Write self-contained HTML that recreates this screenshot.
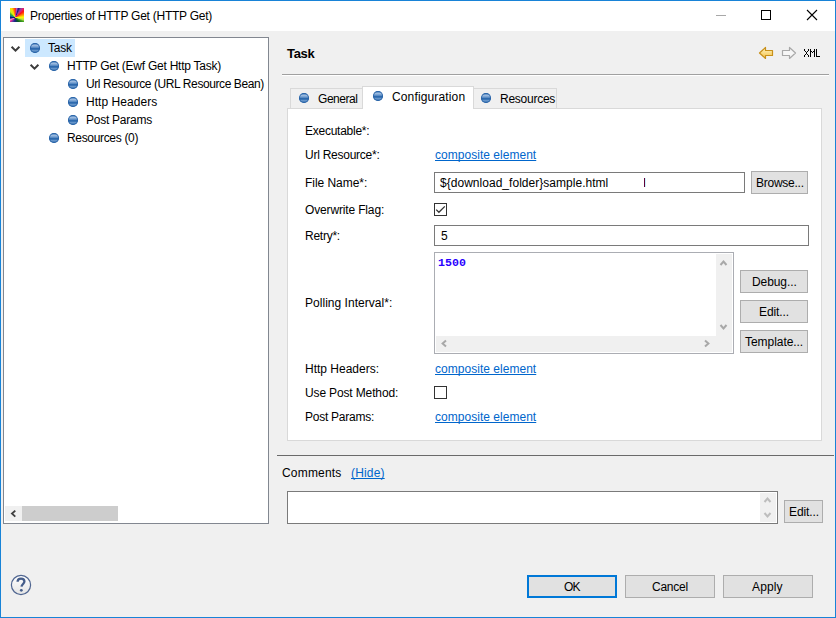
<!DOCTYPE html>
<html><head><meta charset="utf-8">
<style>
*{margin:0;padding:0;box-sizing:border-box}
html,body{width:836px;height:618px;overflow:hidden;background:#f0f0f0}
body{position:relative;font-family:"Liberation Sans",sans-serif;font-size:12px;color:#000}
.a{position:absolute}
.t{position:absolute;white-space:nowrap;font-size:12px;line-height:12px;letter-spacing:-0.25px}
.win{left:0;top:0;width:836px;height:618px;border:1px solid #1883d7}
.title{left:1px;top:1px;width:834px;height:30px;background:#fff}
.tree{left:3px;top:37px;width:266px;height:487px;border:1px solid #828790;background:#fff;overflow:hidden}
.ball{position:absolute;width:10px;height:10px;border-radius:50%;
 background:linear-gradient(#3b78b8 0%,#9ab9de 25%,#6a98cc 42%,#1f5fa6 58%,#6a98cc 76%,#2a66aa 100%);box-shadow:inset 0 0 0 1px rgba(35,95,165,0.85)}
.chev{position:absolute;width:7px;height:7px;border-right:1.6px solid #404040;border-bottom:1.6px solid #404040;transform:rotate(45deg)}
.btn{position:absolute;background:#e1e1e1;border:1px solid #adadad}
.tb{position:absolute;background:#fff;border:1px solid #7a7a7a}
.lnk{color:#0066cc;text-decoration:underline;text-decoration-skip-ink:none;letter-spacing:0.03px}
</style></head><body>
<div class="a win"></div>
<div class="a title"></div>
<!-- title icon -->
<div class="a" style="left:10px;top:8px;width:14px;height:14px;background:conic-gradient(from 0deg at 38% 68%,#ff2020 0deg,#c050c0 8deg,#201880 20deg,#9040a0 32deg,#e02070 42deg,#ff1010 52deg,#ff9000 70deg,#ffff00 87deg,#c0e040 105deg,#40a020 117deg,#106020 140deg,#0a3a60 170deg,#2a2090 195deg,#6040a0 215deg,#e02090 230deg,#f0a0d0 246deg,#0a0a70 267deg,#108090 289deg,#40b030 306deg,#d0f020 322deg,#ffe000 338deg,#ff8000 350deg,#ff2020 360deg)"></div>
<div class="t" style="left:30px;top:10px">Properties of HTTP Get (HTTP Get)</div>
<!-- window controls -->
<div class="a" style="left:716px;top:15px;width:10px;height:1px;background:#a8a8a8"></div>
<div class="a" style="left:761px;top:10px;width:10px;height:10px;border:1px solid #000"></div>
<svg class="a" style="left:806px;top:9px" width="12" height="12" viewBox="0 0 12 12"><path d="M1 1L11 11M11 1L1 11" stroke="#000" stroke-width="1.1"/></svg>

<!-- tree -->
<div class="a tree"></div>
<div class="a" style="left:25px;top:39px;width:50px;height:18px;background:#cce8ff"></div>
<svg class="a" style="left:10px;top:45px" width="12" height="9" viewBox="0 0 12 9"><path d="M1.6 1.8L5.5 5.7L9.4 1.8" stroke="#3c3c3c" stroke-width="2" fill="none"/></svg>
<svg class="a" style="left:29px;top:63px" width="12" height="9" viewBox="0 0 12 9"><path d="M1.6 1.8L5.5 5.7L9.4 1.8" stroke="#3c3c3c" stroke-width="2" fill="none"/></svg>
<div class="ball" style="left:30px;top:43px"></div>
<div class="ball" style="left:49px;top:61px"></div>
<div class="ball" style="left:68px;top:79px"></div>
<div class="ball" style="left:68px;top:97px"></div>
<div class="ball" style="left:68px;top:115px"></div>
<div class="ball" style="left:49px;top:133px"></div>
<div class="t" style="left:48px;top:42px">Task</div>
<div class="t" style="left:67px;top:60px">HTTP Get (Ewf Get Http Task)</div>
<div class="t" style="left:86px;top:78px;letter-spacing:-0.41px">Url Resource (URL Resource Bean)</div>
<div class="t" style="left:86px;top:96px;letter-spacing:0.05px">Http Headers</div>
<div class="t" style="left:86px;top:114px">Post Params</div>
<div class="t" style="left:67px;top:132px;letter-spacing:-0.33px">Resources (0)</div>
<!-- tree h scrollbar -->
<div class="a" style="left:5px;top:506px;width:17px;height:15px;background:#f0f0f0"></div>
<svg class="a" style="left:9px;top:509px" width="9" height="9" viewBox="0 0 9 9"><path d="M6.3 1.6L3 4.6L6.3 7.6" stroke="#404040" stroke-width="1.9" fill="none"/></svg>
<div class="a" style="left:22px;top:506px;width:96px;height:15px;background:#cdcdcd"></div>

<!-- right header -->
<div class="t" style="left:287px;top:47px;font-size:13px;line-height:13px;font-weight:bold;letter-spacing:-0.3px">Task</div>
<div class="a" style="left:282px;top:74px;width:547px;height:1px;background:#a0a0a0"></div>
<div class="a" style="left:282px;top:75px;width:547px;height:1px;background:#fff"></div>
<svg class="a" style="left:758px;top:46px" width="16" height="14" viewBox="0 0 16 14">
 <defs><linearGradient id="ga" x1="0" y1="0" x2="0" y2="1"><stop offset="0" stop-color="#fff6c8"/><stop offset="1" stop-color="#f5c040"/></linearGradient></defs>
 <path d="M1.5 7L7.5 1.5V4.5H14.5V9.5H7.5V12.5Z" fill="url(#ga)" stroke="#c8901a" stroke-width="1.2" stroke-linejoin="round"/></svg>
<svg class="a" style="left:781px;top:46px" width="16" height="14" viewBox="0 0 16 14">
 <path d="M14.5 7L8.5 1.5V4.5H1.5V9.5H8.5V12.5Z" fill="#f6f6f6" stroke="#a8a8a8" stroke-width="1.2" stroke-linejoin="round"/></svg>
<svg class="a" style="left:803px;top:48px" width="18" height="10" viewBox="0 0 18 10" shape-rendering="crispEdges" fill="#000"><rect x="1" y="1" width="1" height="1"/><rect x="5" y="1" width="1" height="1"/><rect x="1" y="2" width="1" height="1"/><rect x="5" y="2" width="1" height="1"/><rect x="2" y="3" width="1" height="1"/><rect x="4" y="3" width="1" height="1"/><rect x="3" y="4" width="1" height="1"/><rect x="3" y="5" width="1" height="1"/><rect x="2" y="6" width="1" height="1"/><rect x="4" y="6" width="1" height="1"/><rect x="1" y="7" width="1" height="1"/><rect x="5" y="7" width="1" height="1"/><rect x="1" y="8" width="1" height="1"/><rect x="5" y="8" width="1" height="1"/><rect x="7" y="1" width="1" height="1"/><rect x="11" y="1" width="1" height="1"/><rect x="7" y="2" width="1" height="1"/><rect x="11" y="2" width="1" height="1"/><rect x="7" y="3" width="1" height="1"/><rect x="11" y="3" width="1" height="1"/><rect x="7" y="4" width="1" height="1"/><rect x="11" y="4" width="1" height="1"/><rect x="7" y="5" width="1" height="1"/><rect x="11" y="5" width="1" height="1"/><rect x="7" y="6" width="1" height="1"/><rect x="11" y="6" width="1" height="1"/><rect x="7" y="7" width="1" height="1"/><rect x="11" y="7" width="1" height="1"/><rect x="7" y="8" width="1" height="1"/><rect x="11" y="8" width="1" height="1"/><rect x="8" y="3" width="1" height="1"/><rect x="10" y="3" width="1" height="1"/><rect x="9" y="4" width="1" height="1"/><rect x="13" y="1" width="1" height="1"/><rect x="13" y="2" width="1" height="1"/><rect x="13" y="3" width="1" height="1"/><rect x="13" y="4" width="1" height="1"/><rect x="13" y="5" width="1" height="1"/><rect x="13" y="6" width="1" height="1"/><rect x="13" y="7" width="1" height="1"/><rect x="13" y="8" width="1" height="1"/><rect x="14" y="8" width="1" height="1"/><rect x="15" y="8" width="1" height="1"/><rect x="16" y="8" width="1" height="1"/></svg>

<!-- tabs -->
<div class="a" style="left:290px;top:88px;width:73px;height:21px;background:#f0f0f0;border:1px solid #d9d9d9;border-bottom:none"></div>
<div class="a" style="left:473px;top:88px;width:84px;height:21px;background:#f0f0f0;border:1px solid #d9d9d9;border-bottom:none"></div>
<div class="a" style="left:287px;top:108px;width:535px;height:333px;background:#fff;border:1px solid #d9d9d9"></div>
<div class="a" style="left:362px;top:86px;width:112px;height:23px;background:#fff;border:1px solid #d9d9d9;border-bottom:none"></div>
<div class="ball" style="left:299px;top:93px"></div>
<div class="ball" style="left:373px;top:91px"></div>
<div class="ball" style="left:481px;top:93px"></div>
<div class="t" style="left:318px;top:93px;letter-spacing:-0.45px">General</div>
<div class="t" style="left:392px;top:91px;letter-spacing:0.14px">Configuration</div>
<div class="t" style="left:500px;top:93px">Resources</div>

<!-- form labels -->
<div class="t" style="left:305px;top:125px">Executable*:</div>
<div class="t" style="left:305px;top:149px">Url Resource*:</div>
<div class="t" style="left:305px;top:177px;letter-spacing:-0.04px">File Name*:</div>
<div class="t" style="left:305px;top:204px;letter-spacing:-0.15px">Overwrite Flag:</div>
<div class="t" style="left:305px;top:230px">Retry*:</div>
<div class="t" style="left:305px;top:297px;letter-spacing:0.03px">Polling Interval*:</div>
<div class="t" style="left:305px;top:363px;letter-spacing:0px">Http Headers:</div>
<div class="t" style="left:305px;top:387px;letter-spacing:-0.14px">Use Post Method:</div>
<div class="t" style="left:305px;top:411px">Post Params:</div>

<div class="t lnk" style="left:435px;top:149px">composite element</div>
<div class="tb" style="left:434px;top:172px;width:311px;height:21px"></div>
<div class="t" style="left:440px;top:177px;letter-spacing:0.03px">${download_folder}sample.html</div>
<div class="a" style="left:644px;top:178px;width:1px;height:9px;background:#600038"></div><div class="a" style="left:645px;top:178px;width:1px;height:9px;background:#c8f4ff"></div>
<div class="btn" style="left:751px;top:171px;width:57px;height:23px"></div>
<div class="t" style="left:756px;top:177px">Browse...</div>

<div class="a" style="left:434px;top:203px;width:13px;height:13px;border:1px solid #333;background:#fff"></div>
<svg class="a" style="left:434px;top:203px" width="13" height="13" viewBox="0 0 13 13"><path d="M2.2 6.6L4.9 9.3L10.8 3.4" stroke="#333" stroke-width="1.3" fill="none"/></svg>

<div class="tb" style="left:434px;top:225px;width:375px;height:21px"></div>
<div class="t" style="left:441px;top:230px">5</div>

<!-- polling textarea -->
<div class="a" style="left:434px;top:252px;width:300px;height:102px;border:1px solid #abadb3;background:#fff"></div>
<div class="a" style="left:716px;top:254px;width:16px;height:98px;background:#f0f0f0"></div>
<div class="a" style="left:436px;top:336px;width:296px;height:16px;background:#f0f0f0"></div>
<svg class="a" style="left:719px;top:259px" width="9" height="8" viewBox="0 0 9 8"><path d="M1.5 6L4.5 2.6L7.5 6" stroke="#a8a8a8" stroke-width="2" fill="none"/></svg>
<svg class="a" style="left:719px;top:323px" width="9" height="8" viewBox="0 0 9 8"><path d="M1.5 2L4.5 5.4L7.5 2" stroke="#a8a8a8" stroke-width="2" fill="none"/></svg>
<svg class="a" style="left:440px;top:339px" width="8" height="9" viewBox="0 0 8 9"><path d="M6 1.5L2.6 4.5L6 7.5" stroke="#a8a8a8" stroke-width="2" fill="none"/></svg>
<svg class="a" style="left:703px;top:339px" width="8" height="9" viewBox="0 0 8 9"><path d="M2 1.5L5.4 4.5L2 7.5" stroke="#a8a8a8" stroke-width="2" fill="none"/></svg>
<div class="t" style="left:438px;top:257px;font-family:'Liberation Mono',monospace;font-weight:bold;font-size:11.6px;line-height:11px;letter-spacing:0.05px;color:#2a00ff">1500</div>

<div class="btn" style="left:740px;top:270px;width:68px;height:23px"></div>
<div class="t" style="left:752px;top:276px;letter-spacing:-0.08px">Debug...</div>
<div class="btn" style="left:740px;top:300px;width:68px;height:23px"></div>
<div class="t" style="left:759px;top:306px;letter-spacing:-0.1px">Edit...</div>
<div class="btn" style="left:740px;top:330px;width:68px;height:23px"></div>
<div class="t" style="left:745px;top:336px;letter-spacing:-0.05px">Template...</div>

<div class="t lnk" style="left:435px;top:363px">composite element</div>
<div class="a" style="left:434px;top:386px;width:13px;height:13px;border:1px solid #333;background:#fff"></div>
<div class="t lnk" style="left:435px;top:411px">composite element</div>

<!-- sash separator -->
<div class="a" style="left:277px;top:455px;width:557px;height:1px;background:#6a6a6a"></div>
<div class="t" style="left:282px;top:467px;letter-spacing:0.19px">Comments</div>
<div class="t lnk" style="left:351px;top:467px;letter-spacing:0.17px">(Hide)</div>
<div class="tb" style="left:287px;top:491px;width:491px;height:33px"></div>
<div class="a" style="left:760px;top:493px;width:16px;height:29px;background:#f0f0f0"></div>
<svg class="a" style="left:763px;top:496px" width="9" height="8" viewBox="0 0 9 8"><path d="M1.5 6L4.5 2.6L7.5 6" stroke="#bdbdbd" stroke-width="2" fill="none"/></svg>
<svg class="a" style="left:763px;top:511px" width="9" height="8" viewBox="0 0 9 8"><path d="M1.5 2L4.5 5.4L7.5 2" stroke="#bdbdbd" stroke-width="2" fill="none"/></svg>
<div class="btn" style="left:784px;top:500px;width:39px;height:23px"></div>
<div class="t" style="left:789px;top:506px;letter-spacing:-0.1px">Edit...</div>

<!-- help -->
<svg class="a" style="left:10px;top:574px" width="22" height="22" viewBox="0 0 22 22">
 <defs><linearGradient id="gh" x1="0" y1="0" x2="0" y2="1"><stop offset="0" stop-color="#ffffff"/><stop offset="1" stop-color="#e4e4e4"/></linearGradient></defs>
 <circle cx="11" cy="11" r="9.6" fill="url(#gh)" stroke="#4f6590" stroke-width="1.2"/>
 <path d="M7.6 7.8C7.6 5.6 9.2 4.6 11 4.6C13 4.6 14.4 5.8 14.4 7.5C14.4 9.6 11.8 10.2 11.5 12.6" stroke="#455d8a" stroke-width="2.3" fill="none"/>
 <circle cx="11.3" cy="16.3" r="1.4" fill="#455d8a"/>
</svg>

<!-- bottom buttons -->
<div class="btn" style="left:527px;top:575px;width:90px;height:23px;border:2px solid #0078d7"></div>
<div class="t" style="left:564px;top:581px;letter-spacing:-0.9px">OK</div>
<div class="btn" style="left:625px;top:575px;width:90px;height:23px"></div>
<div class="t" style="left:652px;top:581px">Cancel</div>
<div class="btn" style="left:723px;top:575px;width:90px;height:23px"></div>
<div class="t" style="left:752px;top:581px;letter-spacing:0.15px">Apply</div>
</body></html>
